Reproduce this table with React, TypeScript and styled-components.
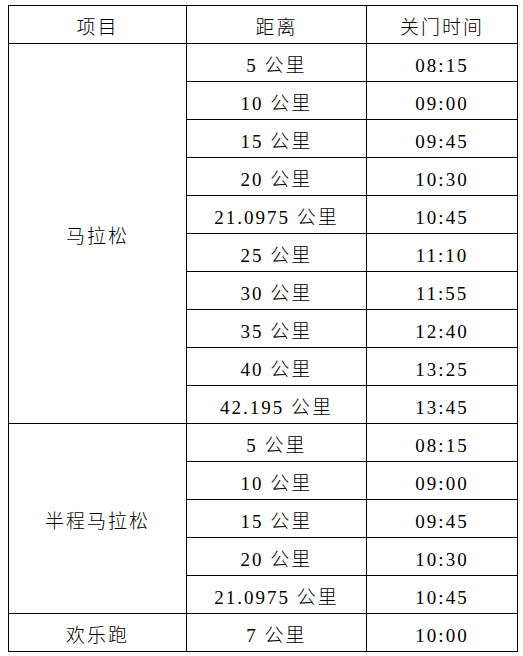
import styled, { createGlobalStyle } from "styled-components";

const GlobalStyle = createGlobalStyle`
  html, body {
    margin: 0;
    padding: 0;
    background: #fff;
  }
  body {
    padding: 5px 0 0 8px;
    font-family: "Liberation Serif", "Noto Sans CJK SC", serif;
  }
`;

interface Row {
  distance: string;
  time: string;
}

interface Group {
  name: string;
  rows: Row[];
}

const groups: Group[] = [
  {
    name: "马拉松",
    rows: [
      { distance: "5 公里", time: "08:15" },
      { distance: "10 公里", time: "09:00" },
      { distance: "15 公里", time: "09:45" },
      { distance: "20 公里", time: "10:30" },
      { distance: "21.0975 公里", time: "10:45" },
      { distance: "25 公里", time: "11:10" },
      { distance: "30 公里", time: "11:55" },
      { distance: "35 公里", time: "12:40" },
      { distance: "40 公里", time: "13:25" },
      { distance: "42.195 公里", time: "13:45" },
    ],
  },
  {
    name: "半程马拉松",
    rows: [
      { distance: "5 公里", time: "08:15" },
      { distance: "10 公里", time: "09:00" },
      { distance: "15 公里", time: "09:45" },
      { distance: "20 公里", time: "10:30" },
      { distance: "21.0975 公里", time: "10:45" },
    ],
  },
  {
    name: "欢乐跑",
    rows: [{ distance: "7 公里", time: "10:00" }],
  },
];

function App() {
  return (
    <>
      <GlobalStyle />
      <Table>
        <colgroup>
          <col style={{ width: 178 }} />
          <col style={{ width: 180 }} />
          <col style={{ width: 151 }} />
        </colgroup>
        <thead>
          <tr>
            <HeadCell>项目</HeadCell>
            <HeadCell>距离</HeadCell>
            <HeadCell>关门时间</HeadCell>
          </tr>
        </thead>
        <tbody>
          {groups.map((g) =>
            g.rows.map((r, i) => (
              <tr key={g.name + i}>
                {i === 0 && <Cell rowSpan={g.rows.length}>{g.name}</Cell>}
                <Cell>{r.distance}</Cell>
                <Cell>{r.time}</Cell>
              </tr>
            ))
          )}
        </tbody>
      </Table>
    </>
  );
}

export default App;

const Table = styled.table`
  border-collapse: collapse;
  table-layout: fixed;
  width: 509px;
  color: #000;
`;

const Cell = styled.td`
  border: 1px solid #000;
  height: 38px;
  padding: 6px 0 0 0;
  box-sizing: border-box;
  text-align: center;
  vertical-align: middle;
  font-family: "Liberation Serif", "Noto Sans CJK SC", serif;
  font-size: 19px;
  font-weight: 300;
  letter-spacing: 2px;
  white-space: nowrap;
  line-height: 1;
`;

const HeadCell = styled(Cell).attrs({ as: "th" })``;
